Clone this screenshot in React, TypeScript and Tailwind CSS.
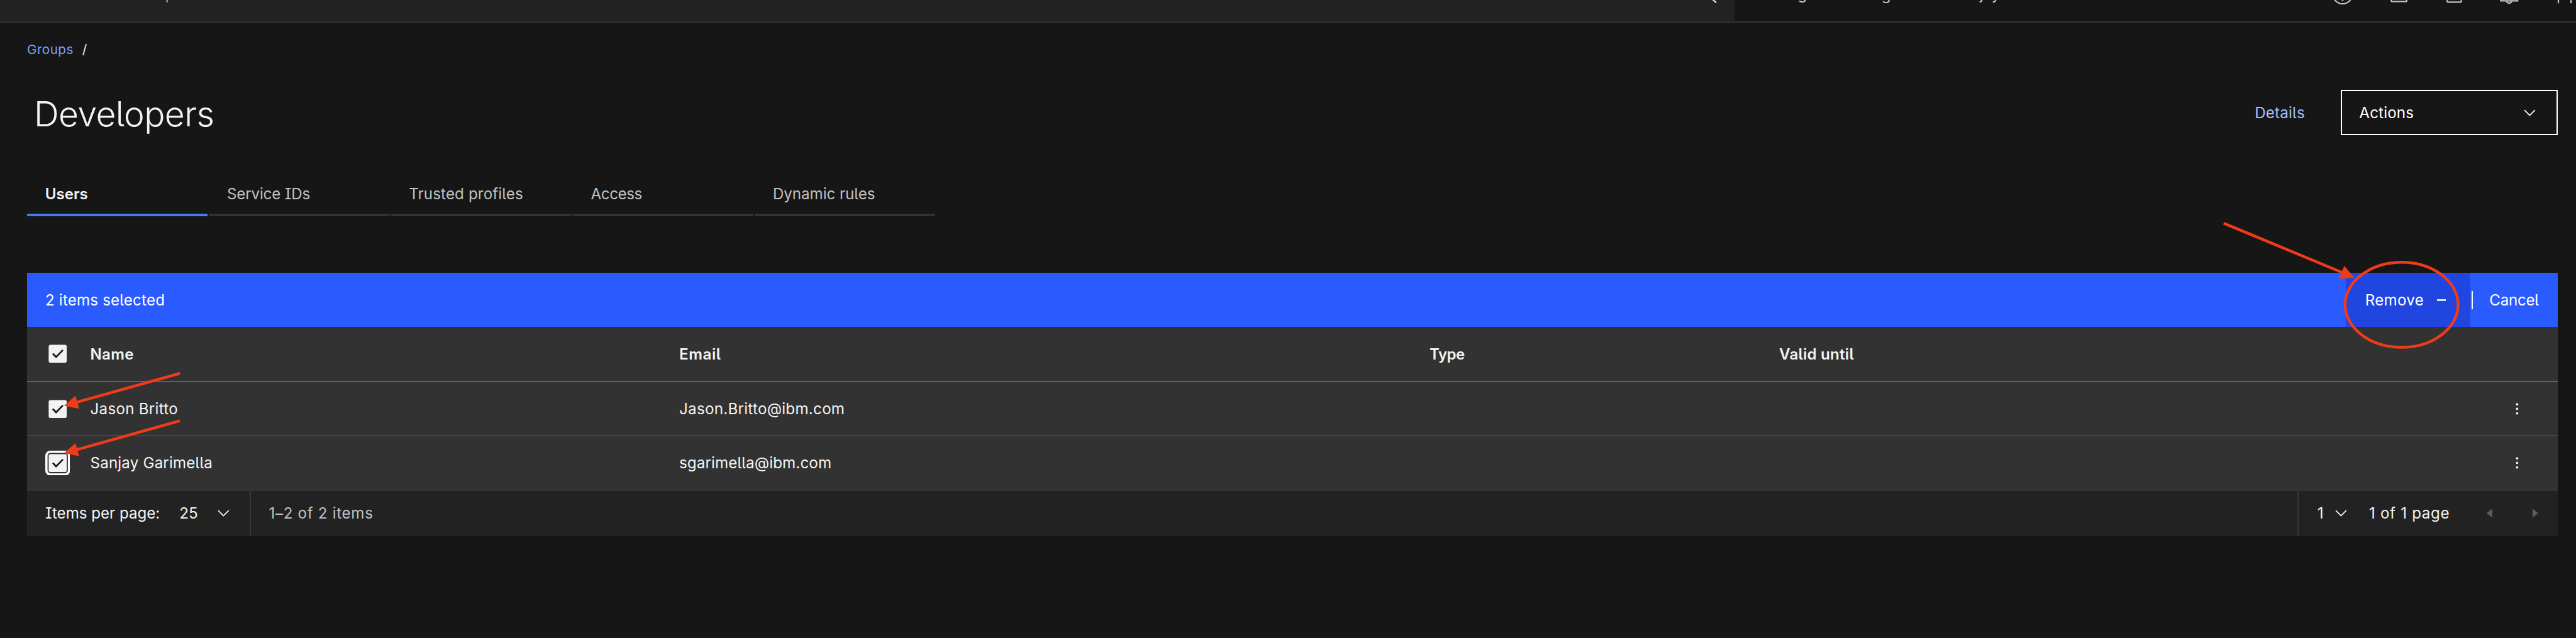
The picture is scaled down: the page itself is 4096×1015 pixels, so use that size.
import type { ReactNode } from "react";

const tabs = [
  { label: "Users", active: true, track: "tracking-normal" },
  { label: "Service IDs", active: false, track: "tracking-[-0.15px]" },
  { label: "Trusted profiles", active: false, track: "tracking-[0.15px]" },
  { label: "Access", active: false, track: "tracking-[-0.4px]" },
  { label: "Dynamic rules", active: false, track: "tracking-normal" },
];

const rows = [
  {
    name: "Jason Britto",
    nameTrack: "tracking-[0.3px]",
    email: "Jason.Britto@ibm.com",
    emailTrack: "tracking-[0.3px]",
    focused: false,
    border: "border-[#464646]",
  },
  {
    name: "Sanjay Garimella",
    nameTrack: "tracking-[0.2px]",
    email: "sgarimella@ibm.com",
    emailTrack: "tracking-[0.15px]",
    focused: true,
    border: "border-transparent",
  },
];

const rowGrid =
  "grid grid-cols-[100.5px_936.5px_1193px_556px_1fr] items-center bg-[#323232] border-b-2";

function ChevronDown() {
  return (
    <svg viewBox="0 0 16 16" className="size-[28.7px] shrink-0" fill="currentColor">
      <path d="M8 11 3 6l.7-.7L8 9.6l4.3-4.3.7.7z" />
    </svg>
  );
}

function Checkbox({ focused = false }: { focused?: boolean }) {
  return (
    <svg viewBox="0 0 44 44" className="ml-[28.7px] block size-[39.5px]">
      {focused && <rect x="2" y="2" width="40" height="40" rx="7" fill="none" stroke="#ffffff" strokeWidth="4" />}
      <rect x="6" y="6" width="32" height="32" rx="3.5" fill="#f2f2f2" />
      <path d="M13.3 21.7 19.1 27.8 31.2 15.5" fill="none" stroke="#161616" strokeWidth="3" />
    </svg>
  );
}

function Overflow() {
  return (
    <svg viewBox="0 0 32 32" className="mr-[50.3px] size-[28.7px] justify-self-end" fill="#f4f4f4">
      <circle cx="16" cy="8" r="2.1" />
      <circle cx="16" cy="16" r="2.1" />
      <circle cx="16" cy="24" r="2.1" />
    </svg>
  );
}

function HeaderCell({ children, track }: { children: ReactNode; track: string }) {
  return <div className={`pt-px font-semibold ${track}`}>{children}</div>;
}

function TopBar() {
  return (
    <header className="h-[36px] overflow-hidden border-b-2 border-[#323232]">
      <div className="flex h-[34px] items-start">
        <div className="flex h-full w-[2758px] items-start justify-between bg-[#222222] pl-[16px] pr-[26px]">
          <div className="-mt-[27px] leading-9 tracking-[-0.45px] text-[#a8a8a8]">Search resources and products...</div>
          <svg viewBox="0 0 16 10" className="h-[9px] w-[14px]" fill="none" stroke="#f4f4f4" strokeWidth="2.4">
            <path d="M5-2 12.5 4.6" />
          </svg>
        </div>
        <div className="-mt-[27px] flex leading-9 text-[#c6c6c6]">
          <div className="w-[138px] pl-[27px]">Catalog</div>
          <div className="-mb-px w-[209px] pl-[34px] pt-px tracking-[-0.3px]">Manage</div>
          <div className="tracking-[-0.1px]">Sanjay J's Account</div>
        </div>
        <svg
          viewBox="4100 0 460 38"
          className="ml-auto h-[34px] w-[413px]"
          fill="none"
          stroke="#c1c1c1"
          strokeWidth="2.5"
        >
          <circle cx="4146" cy="-10.5" r="17.3" />
          <circle cx="4146" cy="0" r="1.8" fill="#c1c1c1" stroke="none" />
          <path d="M4232.5-6V1Q4232.5 2.6 4234 2.6H4258.5Q4260 2.6 4260 1V-6" />
          <path d="M4332-6V2Q4332 3.7 4333.5 3.7H4355.5Q4357 3.7 4357 2V-6" />
          <path d="M4427-6V1.5H4457V-6M4437.5 2C4438.5 6.8 4445.5 6.8 4446.5 2" />
          <path d="M4529.5-2V6M4552-2V6" />
        </svg>
      </div>
    </header>
  );
}

function Annotations() {
  return (
    <svg viewBox="0 0 4560 1130" className="pointer-events-none absolute inset-0 h-[1015px] w-[4096px]">
      <g fill="none" stroke="#ee3c1b" strokeWidth="5">
        <ellipse cx="4251.3" cy="539.8" rx="100" ry="75.3" />
        <path d="M3936.3 395.3 4148 483.5" />
        <path d="M318.5 661.3 134 713" />
        <path d="M318.5 745.3 134 797" />
      </g>
      <g fill="#ee3c1b">
        <path d="M4168 491.7 4149.7 471 4140.4 493.7z" />
        <path d="M113.4 718.7 133.5 700.7 140.2 724z" />
        <path d="M113.4 802.7 133.5 784.7 140.2 808z" />
      </g>
    </svg>
  );
}

export default function App() {
  return (
    <div className="relative h-[1015px] w-[4096px] overflow-hidden whitespace-nowrap bg-[#161616] font-['Inter',sans-serif] text-[24.1px] leading-8 text-[#f4f4f4] [font-feature-settings:'cv08','cv05']">
      <TopBar />

      <main className="pl-[43px] pr-[28.7px]">
        <nav className="mt-[31px] flex h-[24px] items-center gap-[14px] text-[20.7px] leading-6">
          <a className="tracking-[0.45px] text-[#78a0ff]">Groups</a>
          <span>/</span>
        </nav>

        <div className="mt-[52px] flex h-[72px] items-center">
          <h1 className="pl-[11px] pt-[3px] text-[55.2px] font-light leading-[64px] tracking-[-0.6px]">Developers</h1>
          <div className="ml-auto flex items-center">
            <a className="mr-[57.5px] pt-px tracking-[0.2px] text-[#a6c1ff]">Details</a>
            <button className="flex h-[72px] w-[345px] items-center justify-between border-2 border-white pl-[27px] pr-[28.7px] text-white">
              <span className="pt-px tracking-[0.2px]">Actions</span>
              <ChevronDown />
            </button>
          </div>
        </div>

        <div className="mt-[61.2px] flex gap-[2px]">
          {tabs.map((tab) => (
            <div
              key={tab.label}
              className={`flex h-[68px] w-[287.3px] items-center border-b-4 pl-[28.7px] pt-[2px] ${tab.track} ${
                tab.active ? "border-[#4778ff] font-semibold text-[#f4f4f4]" : "border-[#323232] text-[#c1c1c1]"
              }`}
            >
              {tab.label}
            </div>
          ))}
        </div>

        <section className="mt-[89.8px] w-[4024.3px]">
          <div className="flex h-[86.2px] items-stretch bg-[#295bff] text-white">
            <div className="flex items-center pl-[29px] pt-px tracking-[0.2px]">2 items selected</div>
            <button className="ml-auto flex w-[198px] items-center bg-[#2146e0] pl-[30.5px] pt-px">
              <span className="w-[94px] text-left tracking-[0.3px]">Remove</span>
              <span className="ml-[20px] h-[3px] w-[14.5px] bg-[#dbe3ff]" />
            </button>
            <div className="flex w-[139px] items-center pt-px">
              <span className="ml-[1.5px] h-[29px] w-[2px] bg-white" />
              <span className="ml-[26.5px] tracking-[-0.25px]">Cancel</span>
            </div>
          </div>

          <div className={`${rowGrid} h-[88px] border-[#636363]`}>
            <Checkbox />
            <HeaderCell track="tracking-[0.3px]">Name</HeaderCell>
            <HeaderCell track="tracking-[0.6px]">Email</HeaderCell>
            <HeaderCell track="tracking-[-0.5px]">Type</HeaderCell>
            <HeaderCell track="tracking-[0.25px]">Valid until</HeaderCell>
          </div>
          {rows.map((row) => (
            <div key={row.name} className={`${rowGrid} h-[86.2px] ${row.border}`}>
              <Checkbox focused={row.focused} />
              <div className={`pt-px ${row.nameTrack}`}>{row.name}</div>
              <div className={`pt-px ${row.emailTrack}`}>{row.email}</div>
              <div />
              <Overflow />
            </div>
          ))}

          <footer className="flex h-[72px] items-center bg-[#222222]">
            <div className="flex h-full w-[355.5px] items-center border-r-2 border-[#393939] pl-[29px]">
              <span className="w-[213.3px] pt-px">Items per page:</span>
              <span className="w-[56px] pt-px">25</span>
              <ChevronDown />
            </div>
            <span className="pl-[29px] pt-px tracking-[0.7px] text-[#c1c1c1]">1–2 of 2 items</span>
            <div className="ml-auto flex h-full w-[414px] items-center border-l-2 border-[#393939] pl-[29.5px]">
              <span className="w-[23.5px] pt-px">1</span>
              <ChevronDown />
              <span className="ml-[30px] w-[156px] pt-px tracking-[0.7px]">1 of 1 page</span>
              <svg viewBox="0 0 32 32" className="ml-[21px] size-[28.7px] shrink-0" fill="#5c5c5c">
                <path d="M21 8V24L11 16z" />
              </svg>
              <svg viewBox="0 0 32 32" className="ml-[44px] size-[28.7px] shrink-0" fill="#5c5c5c">
                <path d="M11 8V24L21 16z" />
              </svg>
            </div>
          </footer>
        </section>
      </main>

      <Annotations />
    </div>
  );
}
